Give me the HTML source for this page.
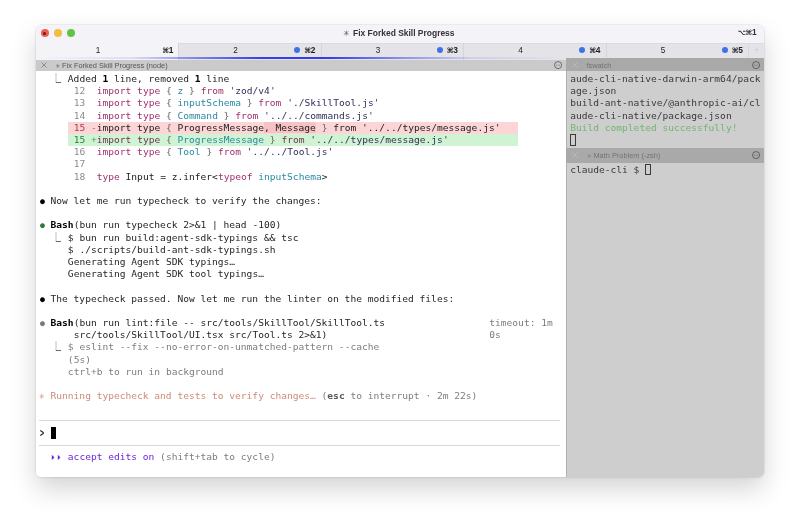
<!DOCTYPE html>
<html><head><meta charset="utf-8"><title>Fix Forked Skill Progress</title>
<style>
html,body{margin:0;padding:0;background:#fff;width:800px;height:524px;overflow:hidden}
.win{position:absolute;left:36px;top:25px;width:728px;height:451.8px;border-radius:5px;overflow:hidden;background:#fff;will-change:transform;
 box-shadow:0 0 0 .5px rgba(0,0,0,.10),0 12px 26px rgba(0,0,0,.17),0 1px 5px rgba(0,0,0,.05)}
.inner{position:absolute;left:0;top:-.5px;width:728.2px;height:452.5px}
.shadow{position:absolute;left:36px;top:24.5px;width:728.2px;height:452.2px;border-radius:6px;}
.tb{position:absolute;left:0;top:0;width:100%;height:19px;background:#f3f3f8}
.tl{position:absolute;top:4.6px;width:8px;height:8px;border-radius:50%}
.title{position:absolute;left:-1.3px;width:100%;top:3.2px;text-align:center;font:bold 8.46px "Liberation Sans",sans-serif;color:#333;letter-spacing:0}
.title .st{font-weight:normal;color:#555;margin-right:3px}
.hk .sy{font-size:7.2px;letter-spacing:-.4px}
.hk{position:absolute;right:7.7px;top:2.4px;font:bold 8.3px "Liberation Sans","DejaVu Sans",sans-serif;color:#333}
.tabs{position:absolute;left:0;top:18.5px;width:100%;height:16.5px;background:#e3e3e8;box-shadow:inset 0 .6px 0 #d4d4da}
.tab{position:absolute;top:0;height:14px;box-sizing:border-box;box-shadow:inset 1px 0 0 #d5d5db;height:16.5px;font:8.2px "Liberation Sans","DejaVu Sans",sans-serif;color:#222}
.tab.act{background:#f3f3f8;box-shadow:none;height:16.5px}
.tn{position:absolute;left:0;top:2.9px;text-align:center}
.tk{position:absolute;left:126.3px;top:2.3px;font-weight:bold;font-size:8.4px}
.tk .sy{font-size:7.4px;position:relative;top:0;letter-spacing:-.3px}
.dot{position:absolute;left:116px;top:3.8px;width:6px;height:6px;border-radius:50%;background:#3f72e4}
.plus{position:absolute;left:712px;top:.5px;width:16px;height:14px;border-left:1px solid #d8d8de;box-sizing:border-box;color:#cdcdd3;font:9px "Liberation Sans",sans-serif;text-align:center;line-height:13px}
.bline{position:absolute;left:0;top:32.3px;width:530.4px;height:2.2px;background:linear-gradient(90deg,rgba(52,60,235,0) 0%,rgba(52,60,235,.12) 18%,rgba(52,60,235,.6) 31%,rgba(52,60,235,1) 43%,rgba(52,60,235,1) 55%,rgba(52,60,235,.5) 69%,rgba(52,60,235,.12) 82%,rgba(52,60,235,0) 100%)}
.pt{position:absolute;font:7.4px "Liberation Sans","DejaVu Sans",sans-serif;white-space:pre}
.pt1{left:0;top:35px;width:530.4px;height:12.1px;background:#cacaca;color:#555;border-bottom:.6px solid #b4b4b4;box-sizing:border-box}
.pt2{left:530.4px;top:33.7px;width:198px;height:13.1px;background:#a9a9a9;color:#727272}
.pt3{left:530.4px;top:123.6px;width:198px;height:14.8px;background:#a9a9a9;color:#747474}
.pt span.t{position:absolute;top:1.6px}
.ss{display:inline-block;width:4.6px;font-size:5.6px;vertical-align:.5px}
.lp{position:absolute;left:0;top:46.5px;width:530.4px;height:406px;background:#fff}
.rp{position:absolute;left:530.4px;top:46.5px;width:198px;height:406px;background:#cecece;border-left:.9px solid #b0b0b0;box-sizing:border-box}
.r{position:absolute;height:12.2px;font:9.589px "DejaVu Sans Mono","Liberation Mono",monospace;line-height:12.2px;white-space:pre;color:#262626}
.b{font-weight:bold;color:#000}
.g{color:#8c8c8c}
.c1.g{color:#6a6a6a}
.c1{display:inline-block;width:5.773px;overflow:visible;white-space:pre}
.c1.bl,.c1.bg,.c1.bd{text-indent:.9px}
.pr{display:inline-block;width:5.773px;color:#222;transform:scale(.72,1.3);transform-origin:62% 58%;font-weight:bold}
.c1.v{font-size:7.4px;text-indent:.6px}
.k{color:#a2306e}
.k2{color:#6e3553}
.i{color:#2b8aa2}
.s{color:#33305a}
.p{color:#666}
.x{color:#222}
.d{color:#7d7d7d}
.db{color:#555;font-weight:bold}
.o{color:#cd8b78}
.v{color:#6d28d9}
.bl{color:#000;font-size:8.2px}
.bg{color:#35773b;font-size:8.2px}
.bd{color:#777;font-size:8.2px}
.rn{color:#b03a48} .rm{color:#b06a70}
.gn{color:#2f7d3c} .gm{color:#5a9a64}
.hl{background:#f6c2c5;color:#222}
.rt{color:#3a3a3a}
.rg{color:#72b672}
.hbar{position:absolute;height:12.2px}
.rule{position:absolute;height:.8px;background:#d8d8d8}
.cur{position:absolute;background:#000}
.hcur{position:absolute;border:.9px solid #3a3a3a;box-sizing:border-box}
svg{position:absolute;overflow:visible}
</style></head><body>
<div class="win"><div class="inner">
 <div class="tb">
  <i class="tl" style="left:4.8px;background:#ec5f57"></i><i class="tl" style="left:12.4px;top:7px;width:3px;height:3px;background:#7a1710;position:absolute;border-radius:50%;left:7.3px;top:7.1px"></i>
  <i class="tl" style="left:17.8px;background:#f5bd3f"></i>
  <i class="tl" style="left:30.8px;background:#5ec545"></i>
  <div class="title"><span class="st">✳</span>Fix Forked Skill Progress</div>
  <div class="hk"><span class="sy">⌥⌘</span>1</div>
 </div>
 <div class="tabs">
<div class="tab act" style="left:0px;width:142px"><span class="tn" style="width:124px">1</span><span class="tk"><span class="sy">⌘</span>1</span></div>
<div class="tab" style="left:142px;width:142.5px"><span class="tn" style="width:115px">2</span><i class="dot"></i><span class="tk"><span class="sy">⌘</span>2</span></div>
<div class="tab" style="left:284.5px;width:142.5px"><span class="tn" style="width:115px">3</span><i class="dot"></i><span class="tk"><span class="sy">⌘</span>3</span></div>
<div class="tab" style="left:427px;width:142.5px"><span class="tn" style="width:115px">4</span><i class="dot"></i><span class="tk"><span class="sy">⌘</span>4</span></div>
<div class="tab" style="left:569.5px;width:142.5px"><span class="tn" style="width:115px">5</span><i class="dot"></i><span class="tk"><span class="sy">⌘</span>5</span></div>
  <div class="plus">+</div>
 </div>
 <div class="pt pt1"><svg style="left:5.2px;top:2.5px" width="6" height="6" viewBox="0 0 6 6"><path d="M.5.5l5 5M5.5.5l-5 5" stroke="#808080" stroke-width=".8" fill="none"/></svg><span class="t" style="left:19.4px"><span class="ss">✳</span> Fix Forked Skill Progress (node)</span>
  <svg style="left:517.5px;top:1.0px" width="8.2" height="8.2" viewBox="0 0 9 9"><circle cx="4.5" cy="4.5" r="3.9" fill="none" stroke="#3c3c3c" stroke-width=".7"/><circle cx="2.7" cy="4.5" r=".5" fill="#3c3c3c"/><circle cx="4.5" cy="4.5" r=".5" fill="#3c3c3c"/><circle cx="6.3" cy="4.5" r=".5" fill="#3c3c3c"/></svg>
 </div>
 <div class="bline"></div>
 <div class="pt pt2"><svg style="left:6px;top:3.6px" width="6" height="6" viewBox="0 0 6 6"><path d="M.5.5l5 5M5.5.5l-5 5" stroke="#bdbdbd" stroke-width=".8" fill="none"/></svg><span class="t" style="left:20px;top:2.4px">fswatch</span>
  <svg style="left:185.2px;top:2.4px" width="8.2" height="8.2" viewBox="0 0 9 9"><circle cx="4.5" cy="4.5" r="3.9" fill="none" stroke="#3c3c3c" stroke-width=".7"/><circle cx="2.7" cy="4.5" r=".5" fill="#3c3c3c"/><circle cx="4.5" cy="4.5" r=".5" fill="#3c3c3c"/><circle cx="6.3" cy="4.5" r=".5" fill="#3c3c3c"/></svg>
 </div>
 <div class="lp"></div>
 <div class="rp"></div>
 <div class="pt pt3"><svg style="left:6px;top:4.2px" width="6" height="6" viewBox="0 0 6 6"><path d="M.5.5l5 5M5.5.5l-5 5" stroke="#bdbdbd" stroke-width=".8" fill="none"/></svg><span class="t" style="left:20.4px;top:3px"><span class="ss">✳</span> Math Problem (-zsh)</span>
  <svg style="left:185.2px;top:3.0px" width="8.2" height="8.2" viewBox="0 0 9 9"><circle cx="4.5" cy="4.5" r="3.9" fill="none" stroke="#3c3c3c" stroke-width=".7"/><circle cx="2.7" cy="4.5" r=".5" fill="#3c3c3c"/><circle cx="4.5" cy="4.5" r=".5" fill="#3c3c3c"/><circle cx="6.3" cy="4.5" r=".5" fill="#3c3c3c"/></svg>
 </div>
 <div class="hbar" style="left:31.86px;top:97.30px;width:450.29px;background:#fcd5d7"></div>
 <div class="hbar" style="left:31.86px;top:109.50px;width:450.29px;background:#d0f3d3"></div>
 <div class="rule" style="left:3.00px;top:395.80px;width:520.72px"></div>
 <div class="rule" style="left:3.00px;top:420.20px;width:520.72px"></div>
 <div class="cur" style="left:14.55px;top:402.40px;width:5.77px;height:11.8px"></div>
<div class="r" style="top:48.50px;left:14.55px"><span class="c1 g">⎿</span>  Added <span class="b">1</span> line, removed <span class="b">1</span> line</div>
<div class="r" style="top:60.70px;left:37.64px"><span class="g">12</span>  <span class="k">import</span> <span class="k">type</span> <span class="p">{</span> <span class="i">z</span> <span class="p">}</span> <span class="k">from</span> <span class="s">&#x27;zod/v4&#x27;</span></div>
<div class="r" style="top:72.90px;left:37.64px"><span class="g">13</span>  <span class="k">import</span> <span class="k">type</span> <span class="p">{</span> <span class="i">inputSchema</span> <span class="p">}</span> <span class="k">from</span> <span class="s">&#x27;./SkillTool.js&#x27;</span></div>
<div class="r" style="top:85.10px;left:37.64px"><span class="g">14</span>  <span class="k">import</span> <span class="k">type</span> <span class="p">{</span> <span class="i">Command</span> <span class="p">}</span> <span class="k">from</span> <span class="s">&#x27;../../commands.js&#x27;</span></div>
<div class="r" style="top:97.30px;left:37.64px"><span class="rn">15</span> <span class="rm">-</span><span class="x">import type </span><span class="p">{</span><span class="x"> ProgressMessage</span><span class="hl">, Message</span><span class="x"> </span><span class="p">}</span><span class="x"> from &#x27;../../types/message.js&#x27;</span></div>
<div class="r" style="top:109.50px;left:37.64px"><span class="gn">15</span> <span class="gm">+</span><span class="k2">import</span> <span class="k2">type</span> <span class="p">{</span> <span class="i">ProgressMessage</span> <span class="p">}</span> <span class="k2">from</span> <span class="s">&#x27;../../types/message.js&#x27;</span></div>
<div class="r" style="top:121.70px;left:37.64px"><span class="g">16</span>  <span class="k">import</span> <span class="k">type</span> <span class="p">{</span> <span class="i">Tool</span> <span class="p">}</span> <span class="k">from</span> <span class="s">&#x27;../../Tool.js&#x27;</span></div>
<div class="r" style="top:133.90px;left:37.64px"><span class="g">17</span></div>
<div class="r" style="top:146.10px;left:37.64px"><span class="g">18</span>  <span class="k">type</span> <span class="x">Input</span> = <span class="x">z.infer&lt;</span><span class="k">typeof</span> <span class="i">inputSchema</span><span class="x">&gt;</span></div>
<div class="r" style="top:170.50px;left:3.00px"><span class="c1 bl">●</span> Now let me run typecheck to verify the changes:</div>
<div class="r" style="top:194.90px;left:3.00px"><span class="c1 bg">●</span> <span class="b">Bash</span>(bun run typecheck 2&gt;&amp;1 | head -100)</div>
<div class="r" style="top:207.10px;left:14.55px"><span class="c1 g">⎿</span>  $ bun run build:agent-sdk-typings &amp;&amp; tsc</div>
<div class="r" style="top:219.30px;left:31.86px">$ ./scripts/build-ant-sdk-typings.sh</div>
<div class="r" style="top:231.50px;left:31.86px">Generating Agent SDK typings<span class="c1 ">…</span></div>
<div class="r" style="top:243.70px;left:31.86px">Generating Agent SDK tool typings<span class="c1 ">…</span></div>
<div class="r" style="top:268.10px;left:3.00px"><span class="c1 bl">●</span> The typecheck passed. Now let me run the linter on the modified files:</div>
<div class="r" style="top:292.50px;left:3.00px"><span class="c1 bd">●</span> <span class="b">Bash</span>(bun run lint:file -- src/tools/SkillTool/SkillTool.ts</div>
<div class="r" style="top:304.70px;left:37.64px">src/tools/SkillTool/UI.tsx src/Tool.ts 2&gt;&amp;1)</div>
<div class="r" style="top:316.90px;left:14.55px"><span class="c1 g">⎿</span><span class="d">  $ eslint --fix --no-error-on-unmatched-pattern --cache</span></div>
<div class="r" style="top:329.10px;left:31.86px"><span class="d">(5s)</span></div>
<div class="r" style="top:341.30px;left:31.86px"><span class="d">ctrl+b to run in background</span></div>
<div class="r" style="top:365.70px;left:3.00px"><span class="c1 o">✳</span><span class="o"> Running typecheck and tests to verify changes</span><span class="c1 o">…</span><span class="d"> (</span><span class="db">esc</span><span class="d"> to interrupt </span><span class="c1 d">·</span><span class="d"> 2m 22s)</span></div>
<div class="r" style="top:402.30px;left:3.00px"><span class="pr">&gt;</span></div>
<div class="r" style="top:426.70px;left:14.55px"><span class="c1 v">⏵</span><span class="c1 v">⏵</span><span class="v"> accept edits on</span><span class="d"> (shift+tab to cycle)</span></div>
<div class="r" style="top:292.50px;left:453.29px"><span class="d">timeout: 1m</span></div>
<div class="r" style="top:304.70px;left:453.29px"><span class="d">0s</span></div>
<div class="r" style="top:48.50px;left:534.20px"><span class="rt">aude-cli-native-darwin-arm64/pack</span></div>
<div class="r" style="top:60.70px;left:534.20px"><span class="rt">age.json</span></div>
<div class="r" style="top:72.90px;left:534.20px"><span class="rt">build-ant-native/@anthropic-ai/cl</span></div>
<div class="r" style="top:85.10px;left:534.20px"><span class="rt">aude-cli-native/package.json</span></div>
<div class="r" style="top:97.30px;left:534.20px"><span class="rg">Build completed successfully!</span></div>
<div class="r" style="top:139.10px;left:534.20px"><span class="rt">claude-cli $</span></div>
 <div class="hcur" style="left:534.20px;top:109.60px;width:5.77px;height:11.6px"></div>
 <div class="hcur" style="left:609.25px;top:139.20px;width:5.77px;height:11.6px"></div>
</div></div>
</body></html>
